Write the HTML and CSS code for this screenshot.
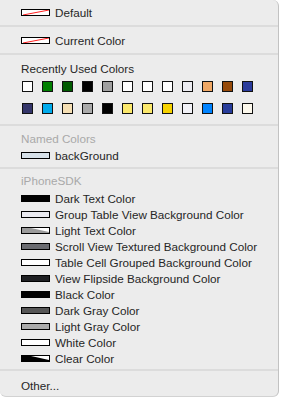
FILE: index.html
```html
<!DOCTYPE html>
<html lang="en">
<head>
  <meta charset="UTF-8" />
  <title>Colors</title>
  <link rel="stylesheet" href="styles.css">
</head>
<body>
  <div class="menu">
    <div class="section first">
      <div class="item">
        <span class="swatch">
          <svg viewBox="0 0 27 5" preserveAspectRatio="none"><line x1="1" y1="5" x2="27" y2="0" stroke="#ff2020" stroke-width="1"/></svg>
        </span>
        Default
      </div>
    </div>
    <div class="sep"></div>
    <div class="section">
      <div class="item">
        <span class="swatch">
          <svg viewBox="0 0 27 5" preserveAspectRatio="none"><line x1="1" y1="5" x2="27" y2="0" stroke="#ff2020" stroke-width="1"/></svg>
        </span>
        Current Color
      </div>
    </div>
    <div class="sep"></div>
    <div class="section recent">
      <div class="header dark">Recently Used Colors</div>
      <div class="grid">
        <span class="chip" style="background:#ffffff"></span>
        <span class="chip" style="background:#007f00"></span>
        <span class="chip" style="background:#005a00"></span>
        <span class="chip" style="background:#000000"></span>
        <span class="chip" style="background:#a0a0a0"></span>
        <span class="chip" style="background:#ffffff"></span>
        <span class="chip" style="background:#ffffff"></span>
        <span class="chip" style="background:#ffffff"></span>
        <span class="chip" style="background:#ececf1"></span>
        <span class="chip" style="background:#f0a865"></span>
        <span class="chip" style="background:#964a0a"></span>
        <span class="chip" style="background:#2a3b9c"></span>
        <span class="chip" style="background:#34356a"></span>
        <span class="chip" style="background:#00abec"></span>
        <span class="chip" style="background:#f5dfb4"></span>
        <span class="chip" style="background:#aaaaaa"></span>
        <span class="chip" style="background:#000000"></span>
        <span class="chip" style="background:#fbe86c"></span>
        <span class="chip" style="background:#fbe86c"></span>
        <span class="chip" style="background:#f6d200"></span>
        <span class="chip" style="background:#f1f1f6"></span>
        <span class="chip" style="background:#0083ff"></span>
        <span class="chip" style="background:#283d9b"></span>
        <span class="chip" style="background:#fcf8ec"></span>
      </div>
    </div>
    <div class="sep"></div>
    <div class="section named">
      <div class="header">Named Colors</div>
      <div class="item"><span class="swatch" style="background:#d6e0e8"></span>backGround</div>
    </div>
    <div class="sep"></div>
    <div class="section sdk">
      <div class="header">iPhoneSDK</div>
      <div class="list">
        <div class="item"><span class="swatch" style="background:#000000"></span>Dark Text Color</div>
        <div class="item"><span class="swatch" style="background:#eaeaf0"></span>Group Table View Background Color</div>
        <div class="item">
          <span class="swatch" style="background:#9a9a9a">
            <svg viewBox="0 0 27 5" preserveAspectRatio="none"><polygon points="9,0 27,0 27,4" fill="#ffffff"/></svg>
          </span>
          Light Text Color
        </div>
        <div class="item"><span class="swatch" style="background:#6a6b70"></span>Scroll View Textured Background Color</div>
        <div class="item"><span class="swatch" style="background:#ffffff"></span>Table Cell Grouped Background Color</div>
        <div class="item"><span class="swatch" style="background:#1f2023"></span>View Flipside Background Color</div>
        <div class="item"><span class="swatch" style="background:#000000"></span>Black Color</div>
        <div class="item"><span class="swatch" style="background:#555555"></span>Dark Gray Color</div>
        <div class="item"><span class="swatch" style="background:#aaaaaa"></span>Light Gray Color</div>
        <div class="item"><span class="swatch" style="background:#ffffff"></span>White Color</div>
        <div class="item">
          <span class="swatch" style="background:#000000">
            <svg viewBox="0 0 27 5" preserveAspectRatio="none"><polygon points="9,0 27,0 27,4" fill="#ffffff"/></svg>
          </span>
          Clear Color
        </div>
      </div>
    </div>
    <div class="sep"></div>
    <div class="section last">
      <div class="item plain">Other...</div>
    </div>
  </div>
</body>
</html>
```

FILE: styles.css
```css
:root {
  --menu-bg: #ececec;
  --sep: #dcdcdc;
  --text: #262626;
  --muted: #a9a9a9;
}

* {
  box-sizing: border-box;
  margin: 0;
  padding: 0;
}

body {
  background: #ffffff;
  font-family: "Liberation Sans", Arial, sans-serif;
  font-size: 11.7px;
  color: var(--text);
}

.menu {
  width: 279px;
  height: 397px;
  background: var(--menu-bg);
  border-right: 1px solid #c2c2c2;
  border-bottom: 1px solid #d2d2d2;
  border-radius: 0 6px 6px 6px;
  overflow: hidden;
}

.sep {
  height: 2px;
  background: var(--sep);
}

.section {
  padding: 5px 0;
}

.section.first {
  padding: 4px 0 5px;
}

.section.recent {
  padding: 6px 0 10px;
}

.section.named {
  padding: 5px 0 4px;
}

.section.sdk {
  padding: 4px 0 3px;
}

.section.last {
  padding: 6px 0 3px;
}

.item {
  display: flex;
  align-items: center;
  height: 16px;
  padding-left: 21px;
  white-space: nowrap;
}

.header {
  height: 16px;
  line-height: 16px;
  padding-left: 21px;
  color: var(--muted);
}

.header.dark {
  color: var(--text);
}

.sdk .list {
  margin-top: 1px;
}

.swatch {
  display: inline-block;
  flex: none;
  width: 29px;
  height: 7px;
  border: 1px solid #000000;
  background: #ffffff;
  margin-right: 5px;
}

.swatch svg {
  display: block;
  width: 100%;
  height: 100%;
}

.grid {
  display: grid;
  grid-template-columns: repeat(12, 11px);
  column-gap: 9px;
  row-gap: 11px;
  padding-left: 22px;
  margin-top: 4px;
}

.chip {
  width: 11px;
  height: 11px;
  border: 1px solid #111111;
}
```
